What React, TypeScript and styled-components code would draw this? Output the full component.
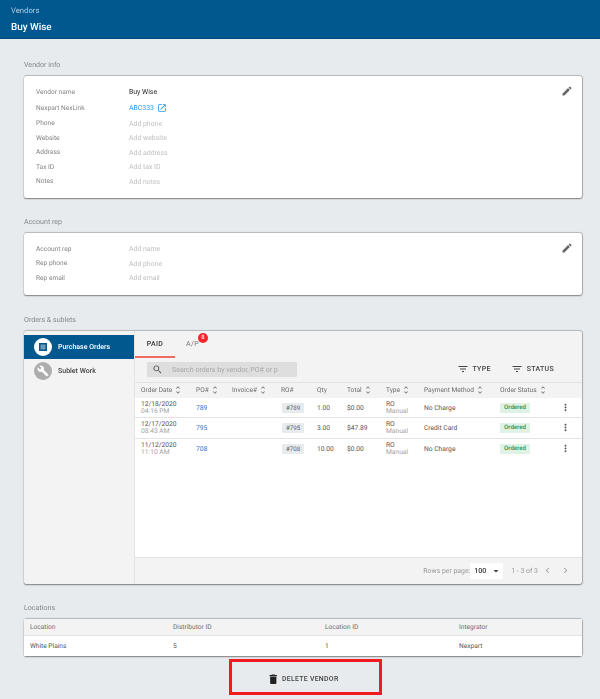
import React from "react";
import styled, { createGlobalStyle } from "styled-components";

const Global = createGlobalStyle`
  html, body { margin: 0; padding: 0; background: #e8ebee; }
  body { font-family: Roboto, "Liberation Sans", sans-serif; color: #3c3c3c; text-rendering: geometricPrecision; }
  * { box-sizing: border-box; }
`;

const Page = styled.div`
  width: 600px;
  height: 699px;
  overflow: hidden;
  opacity: 0.999;
`;
const Header = styled.header`
  height: 39px;
  background: #01588f;
  border-bottom: 1px solid #014a80;
  padding: 6px 11px 0;
  color: #fff;
`;
const Crumb = styled.div`
  font-size: 7.7px;
  line-height: 10px;
  color: #b5cbdc;
`;
const Title = styled.h1`
  margin: 6px 0 0;
  font-size: 9.9px;
  line-height: 12px;
  font-weight: 500;
  color: #fff;
`;
const Main = styled.main`
  padding: 20px 18px 0 24px;
  display: flex;
  flex-direction: column;
  gap: 18px;
`;
const Section = styled.section<{ $push?: number }>`
  display: flex;
  flex-direction: column;
  gap: 5px;
  margin-top: ${(p) => p.$push ?? 0}px;
`;
const SectionLabel = styled.div`
  font-size: 7.1px;
  line-height: 12px;
  color: #85888b;
`;
const Card = styled.div`
  position: relative;
  background: #fff;
  border-radius: 2px;
  box-shadow: 0 1px 1.5px rgba(0, 0, 0, 0.45), 0 -0.5px 1px rgba(0, 0, 0, 0.2), 0.5px 0 1px rgba(0, 0, 0, 0.2);
`;
const InfoCard = styled(Card)`
  padding: 9px 12px 9px;
`;
const InfoRow = styled.div<{ $tall?: boolean }>`
  display: grid;
  grid-template-columns: 93px 1fr;
  align-items: center;
  height: ${(p) => (p.$tall ? "17px" : "14.5px")};
`;
const InfoLabel = styled.div`
  font-size: 6.6px;
  color: #808386;
  margin-top: -1px;
`;
const InfoValue = styled.div<{ $kind?: "plain" | "link" | "empty" }>`
  display: flex;
  align-items: center;
  gap: 3px;
  font-size: 6.9px;
  color: ${(p) => (p.$kind === "link" ? "#2b95e9" : p.$kind === "plain" ? "#2a2a2a" : "#c0c1c2")};
`;
const EditButton = styled.div`
  position: absolute;
  top: 9px;
  right: 9px;
  width: 12px;
  height: 12px;
  color: #666;
`;
const Icon = styled.svg<{ $size?: number; $color?: string }>`
  display: block;
  flex: none;
  width: ${(p) => p.$size ?? 12}px;
  height: ${(p) => p.$size ?? 12}px;
  fill: ${(p) => p.$color ?? "currentColor"};
`;
const OrdersCard = styled(Card)`
  height: 253px;
  display: grid;
  grid-template-columns: 111px 1fr;
  background: #f3f3f3;
  overflow: hidden;
`;
const Sidebar = styled.nav`
  padding-top: 4px;
  border-right: 1px solid #e4e4e4;
`;
const SideItem = styled.div<{ $active?: boolean }>`
  height: 24.5px;
  display: flex;
  align-items: center;
  gap: 6px;
  padding-left: 10px;
  font-size: 7px;
  font-weight: 500;
  background: ${(p) => (p.$active ? "#01588f" : "transparent")};
  color: ${(p) => (p.$active ? "#fff" : "#444")};
`;
const SideCircle = styled.span<{ $active?: boolean }>`
  width: 18px;
  height: 18px;
  border-radius: 50%;
  display: flex;
  align-items: center;
  justify-content: center;
  background: ${(p) => (p.$active ? "#fff" : "#adadad")};
  color: ${(p) => (p.$active ? "#01588f" : "#fff")};
`;
const Pane = styled.div`
  display: flex;
  flex-direction: column;
  min-width: 0;
`;
const Tabs = styled.div`
  display: flex;
  height: 27px;
`;
const Tab = styled.div<{ $active?: boolean }>`
  position: relative;
  display: flex;
  align-items: center;
  justify-content: center;
  padding-top: 1px;
  font-size: 7px;
  letter-spacing: 0.3px;
  font-weight: ${(p) => (p.$active ? 500 : 400)};
  color: ${(p) => (p.$active ? "#333" : "#777")};
  border-bottom: 2px solid ${(p) => (p.$active ? "#ee6b5e" : "transparent")};
  margin-left: ${(p) => (p.$active ? 0 : "5.5px")};
  width: ${(p) => (p.$active ? "40px" : "24px")};
`;
const Badge = styled.span`
  position: absolute;
  top: 2px;
  right: -3.5px;
  width: 10px;
  height: 10px;
  border-radius: 50%;
  background: #f4232c;
  color: #fff;
  font-size: 6px;
  line-height: 10px;
  text-align: center;
`;
const Toolbar = styled.div`
  height: 24px;
  padding: 4px 28px 0 12px;
  display: flex;
  align-items: flex-start;
`;
const Search = styled.div`
  width: 150px;
  height: 15px;
  background: #dedede;
  border-radius: 1px;
  display: flex;
  align-items: center;
  gap: 9px;
  padding-left: 5px;
  font-size: 7.05px;
  white-space: nowrap;
  overflow: hidden;
  color: #a8a8a8;
`;
const FilterGroup = styled.div`
  margin-left: auto;
  display: flex;
  align-items: center;
  gap: 20px;
  height: 15px;
`;
const Filter = styled.div`
  display: flex;
  align-items: center;
  gap: 4px;
  font-size: 7px;
  font-weight: 500;
  letter-spacing: 0.3px;
  color: #444;
`;
const columns = "55px 36px 49px 36px 30px 39px 38px 76px 58px 1fr";
const TableHead = styled.div`
  display: grid;
  grid-template-columns: ${columns};
  height: 16.5px;
  padding: 0 0 1px 6px;
  align-items: center;
  border-top: 1px solid #e2e2e2;
  font-size: 6.6px;
  color: #6c6c6c;
`;
const HeadCell = styled.div`
  display: flex;
  align-items: center;
  gap: 1px;
  white-space: nowrap;
`;
const TableBody = styled.div`
  flex: 1;
  background: #fff;
  border-bottom: 1px solid #e4e4e4;
`;
const TableRow = styled.div`
  display: grid;
  grid-template-columns: ${columns};
  height: 20.3px;
  padding-left: 6px;
  align-items: center;
  border-bottom: 1px solid #e4e4e4;
  font-size: 6.7px;
  color: #555;
  &:last-child {
    border-bottom: 0;
  }
`;
const Stack = styled.div`
  display: flex;
  flex-direction: column;
  margin-top: 1px;
  line-height: 7px;
  white-space: nowrap;
`;
const Muted = styled.span`
  color: #a3a3a3;
`;
const PoLink = styled.span`
  color: #2f6fcf;
`;
const RoChip = styled.span`
  justify-self: start;
  margin-left: 1px;
  width: 22px;
  height: 10px;
  text-align: center;
  line-height: 10px;
  font-size: 6.2px;
  border-radius: 1px;
  background: #e8ebee;
  color: #55626a;
`;
const StatusChip = styled.span`
  justify-self: start;
  width: 30px;
  height: 10px;
  text-align: center;
  line-height: 10px;
  font-size: 6.1px;
  font-weight: 500;
  border-radius: 1px;
  background: #dff2e6;
  color: #23935a;
`;
const MoreCell = styled.div`
  display: flex;
  justify-content: center;
  padding-right: 9px;
  color: #555;
`;
const Pager = styled.div`
  height: 26px;
  display: flex;
  align-items: center;
  justify-content: flex-end;
  padding: 0 11px 0 0;
  font-size: 6.9px;
  color: #9a9a9a;
`;
const PageSelect = styled.div`
  width: 33px;
  height: 16px;
  margin: 0 8px 0 0;
  padding: 0 1px 0 4px;
  background: #fff;
  display: flex;
  align-items: center;
  justify-content: space-between;
  font-weight: 500;
  font-size: 7px;
  color: #333;
`;
const PagerArrows = styled.div`
  display: flex;
  gap: 7px;
  margin-left: 4px;
  color: #a5a5a5;
`;
const LocGrid = styled.div<{ $head?: boolean }>`
  display: grid;
  grid-template-columns: 143px 152px 134px 1fr;
  padding-left: 6px;
  align-items: center;
  font-size: 6.6px;
  height: ${(p) => (p.$head ? "17px" : "20px")};
  color: ${(p) => (p.$head ? "#6c6c6c" : "#555")};
  background: ${(p) => (p.$head ? "#f3f3f3" : "#fff")};
  border-bottom: ${(p) => (p.$head ? "1px solid #e4e4e4" : "0")};
`;
const DeleteWrap = styled.div`
  display: flex;
  justify-content: center;
  margin-top: -15px;
`;
const DeleteButton = styled.button`
  width: 153px;
  height: 36.5px;
  margin-left: 5px;
  border: 3px solid #f11a1f;
  background: transparent;
  display: flex;
  align-items: center;
  justify-content: center;
  gap: 2px;
  padding: 4px 5px 0 0;
  font-family: inherit;
  font-size: 6.9px;
  font-weight: 500;
  letter-spacing: 0.3px;
  color: #444;
`;

const P = {
  edit: "M3 17.25V21h3.75L17.81 9.94l-3.75-3.75L3 17.25zM20.71 7.04c.39-.39.39-1.02 0-1.41l-2.34-2.34c-.39-.39-1.02-.39-1.41 0l-1.83 1.83 3.75 3.75 1.83-1.83z",
  open: "M19 19H5V5h7V3H5c-1.11 0-2 .9-2 2v14c0 1.1.89 2 2 2h14c1.1 0 2-.9 2-2v-7h-2v7zM14 3v2h3.59l-9.83 9.83 1.41 1.41L19 6.41V10h2V3h-7z",
  trash: "M6 19c0 1.1.9 2 2 2h8c1.1 0 2-.9 2-2V7H6v12zM19 4h-3.5l-1-1h-5l-1 1H5v2h14V4z",
  search: "M15.5 14h-.79l-.28-.27C15.41 12.59 16 11.11 16 9.5 16 5.91 13.09 3 9.5 3S3 5.91 3 9.5 5.91 16 9.5 16c1.61 0 3.09-.59 4.23-1.57l.27.28v.79l5 4.99L20.49 19l-4.99-5zm-6 0C7.01 14 5 11.99 5 9.5S7.01 5 9.5 5 14 7.01 14 9.5 11.99 14 9.5 14z",
  filter: "M10 18h4v-2h-4v2zM3 6v2h18V6H3zm3 7h12v-2H6v2z",
  more: "M12 8c1.1 0 2-.9 2-2s-.9-2-2-2-2 .9-2 2 .9 2 2 2zm0 2c-1.1 0-2 .9-2 2s.9 2 2 2 2-.9 2-2-.9-2-2-2zm0 6c-1.1 0-2 .9-2 2s.9 2 2 2 2-.9 2-2-.9-2-2-2z",
  wrench: "M22.7 19l-9.1-9.1c.9-2.3.4-5-1.5-6.9-2-2-5-2.4-7.4-1.3L9 6 6 9 1.6 4.7C.4 7.1.9 10.1 2.9 12.1c1.9 1.9 4.6 2.4 6.9 1.5l9.1 9.1c.4.4 1 .4 1.4 0l2.3-2.3c.5-.4.5-1.1.1-1.4z",
  left: "M15.41 7.41L14 6l-6 6 6 6 1.41-1.41L10.83 12z",
  right: "M10 6L8.59 7.41 13.17 12l-4.58 4.59L10 18l6-6z",
  sort: "M12 5.83L15.17 9l1.41-1.41L12 3 7.41 7.59 8.83 9 12 5.83zm0 12.34L8.83 15l-1.41 1.41L12 21l4.59-4.59L15.17 15 12 18.17z",
  drop: "M7 10l5 5 5-5z",
};

const Ico = ({ d, size, color }: { d: string; size?: number; color?: string }) => (
  <Icon viewBox="0 0 24 24" $size={size} $color={color}>
    <path d={d} fillRule="evenodd" />
  </Icon>
);

const OrderGlyph = () => (
  <Icon viewBox="0 0 24 24" $size={12}>
    <rect x="4" y="4" width="16" height="16" fill="#01588f" />
    <rect x="7" y="7" width="10" height="10" fill="#6f97b6" />
  </Icon>
);

const Head = ({ label, sort = true }: { label: string; sort?: boolean }) => (
  <HeadCell>
    {label}
    {sort && <Ico d={P.sort} size={10} color="#777" />}
  </HeadCell>
);

const vendorRows: [string, string][] = [
  ["Phone", "Add phone"],
  ["Website", "Add website"],
  ["Address", "Add address"],
  ["Tax ID", "Add tax ID"],
  ["Notes", "Add notes"],
];
const repRows: [string, string][] = [
  ["Account rep", "Add name"],
  ["Rep phone", "Add phone"],
  ["Rep email", "Add email"],
];
const orders = [
  { date: "12/18/2020", time: "04:16 PM", po: "789", qty: "1.00", total: "$0.00", pay: "No Charge" },
  { date: "12/17/2020", time: "08:43 AM", po: "795", qty: "3.00", total: "$47.89", pay: "Credit Card" },
  { date: "11/12/2020", time: "11:10 AM", po: "708", qty: "10.00", total: "$0.00", pay: "No Charge" },
];

export default function App() {
  return (
    <Page>
      <Global />
      <Header>
        <Crumb>Vendors</Crumb>
        <Title>Buy Wise</Title>
      </Header>
      <Main>
        <Section>
          <SectionLabel>Vendor info</SectionLabel>
          <InfoCard>
            <EditButton>
              <Ico d={P.edit} />
            </EditButton>
            <InfoRow>
              <InfoLabel>Vendor name</InfoLabel>
              <InfoValue $kind="plain">Buy Wise</InfoValue>
            </InfoRow>
            <InfoRow $tall>
              <InfoLabel>Nexpart NexLink</InfoLabel>
              <InfoValue $kind="link">
                ABC333 <Ico d={P.open} size={10} />
              </InfoValue>
            </InfoRow>
            {vendorRows.map(([l, v]) => (
              <InfoRow key={l}>
                <InfoLabel>{l}</InfoLabel>
                <InfoValue>{v}</InfoValue>
              </InfoRow>
            ))}
          </InfoCard>
        </Section>
        <Section>
          <SectionLabel>Account rep</SectionLabel>
          <InfoCard>
            <EditButton>
              <Ico d={P.edit} />
            </EditButton>
            {repRows.map(([l, v]) => (
              <InfoRow key={l}>
                <InfoLabel>{l}</InfoLabel>
                <InfoValue>{v}</InfoValue>
              </InfoRow>
            ))}
          </InfoCard>
        </Section>
        <Section $push={1}>
          <SectionLabel>Orders &amp; sublets</SectionLabel>
          <OrdersCard>
            <Sidebar>
              <SideItem $active>
                <SideCircle $active>
                  <OrderGlyph />
                </SideCircle>
                Purchase Orders
              </SideItem>
              <SideItem>
                <SideCircle>
                  <Ico d={P.wrench} size={12} />
                </SideCircle>
                Sublet Work
              </SideItem>
            </Sidebar>
            <Pane>
              <Tabs>
                <Tab $active>PAID</Tab>
                <Tab>
                  A/P
                  <Badge>8</Badge>
                </Tab>
              </Tabs>
              <Toolbar>
                <Search>
                  <Ico d={P.search} size={11} color="#555" />
                  Search orders by vendor, PO# or p
                </Search>
                <FilterGroup>
                  <Filter>
                    <Ico d={P.filter} size={12} color="#444" />
                    TYPE
                  </Filter>
                  <Filter>
                    <Ico d={P.filter} size={12} color="#444" />
                    STATUS
                  </Filter>
                </FilterGroup>
              </Toolbar>
              <TableHead>
                <Head label="Order Date" />
                <Head label="PO#" />
                <Head label="Invoice#" />
                <Head label="RO#" sort={false} />
                <Head label="Qty" sort={false} />
                <Head label="Total" />
                <Head label="Type" />
                <Head label="Payment Method" />
                <Head label="Order Status" />
              </TableHead>
              <TableBody>
                {orders.map((o) => (
                  <TableRow key={o.po}>
                    <Stack>
                      <span>{o.date}</span>
                      <Muted>{o.time}</Muted>
                    </Stack>
                    <PoLink>{o.po}</PoLink>
                    <span />
                    <RoChip>#{o.po}</RoChip>
                    <span>{o.qty}</span>
                    <span>{o.total}</span>
                    <Stack>
                      <span>RO</span>
                      <Muted>Manual</Muted>
                    </Stack>
                    <span>{o.pay}</span>
                    <StatusChip>Ordered</StatusChip>
                    <MoreCell>
                      <Ico d={P.more} size={11} />
                    </MoreCell>
                  </TableRow>
                ))}
              </TableBody>
              <Pager>
                Rows per page:
                <PageSelect>
                  100
                  <Ico d={P.drop} size={12} color="#444" />
                </PageSelect>
                1 - 3 of 3
                <PagerArrows>
                  <Ico d={P.left} size={11} />
                  <Ico d={P.right} size={11} />
                </PagerArrows>
              </Pager>
            </Pane>
          </OrdersCard>
        </Section>
        <Section>
          <SectionLabel>Locations</SectionLabel>
          <Card>
            <LocGrid $head>
              <span>Location</span>
              <span>Distributor ID</span>
              <span>Location ID</span>
              <span>Integrator</span>
            </LocGrid>
            <LocGrid>
              <span>White Plains</span>
              <span>5</span>
              <span>1</span>
              <span>Nexpart</span>
            </LocGrid>
          </Card>
        </Section>
        <DeleteWrap>
          <DeleteButton>
            <Ico d={P.trash} size={12.5} color="#222" />
            DELETE VENDOR
          </DeleteButton>
        </DeleteWrap>
      </Main>
    </Page>
  );
}
